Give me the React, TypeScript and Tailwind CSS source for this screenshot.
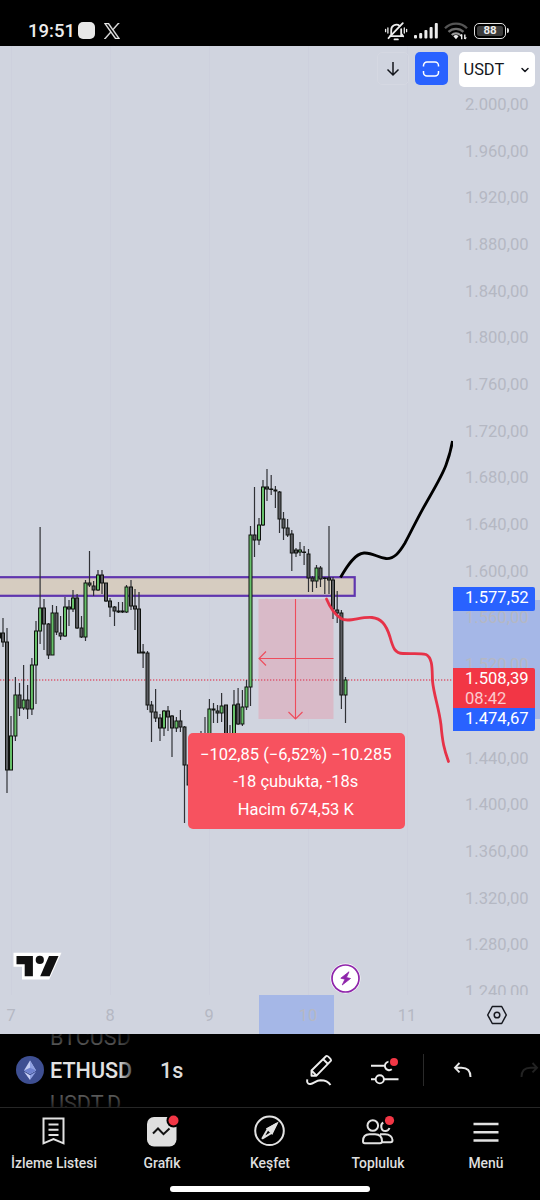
import { ChevronDown } from 'lucide-react';

// [x, high, bodyTop, bodyBottom, low, isUp]
const candles: [number, number, number, number, number, number][] = [
    [-1, 632, 633, 638, 638, 0],
    [3, 618, 633, 642, 647, 0],
    [7, 628, 642, 770, 793, 0],
    [11, 716, 736, 770, 770, 1],
    [15.4, 677, 695, 736, 741, 1],
    [19.5, 683, 695, 708, 716, 0],
    [23.6, 665, 700, 708, 710, 1],
    [27.6, 685, 700, 709, 719, 0],
    [31.9, 658, 665, 709, 715, 1],
    [36, 621, 631, 665, 704, 1],
    [40.1, 527, 608, 631, 644, 1],
    [44, 599, 608, 624, 650, 0],
    [48.5, 623, 624, 655, 659, 0],
    [52.5, 605, 613, 655, 655, 1],
    [56.5, 606, 613, 632, 635, 0],
    [60.6, 616, 633, 636, 640, 0],
    [65, 597, 607, 636, 637, 1],
    [69, 600, 607, 609, 626, 0],
    [73, 590, 598, 609, 612, 1],
    [77.1, 594, 598, 628, 629, 0],
    [81.5, 616, 628, 637, 638, 0],
    [85.5, 580, 583, 637, 641, 1],
    [89.5, 551, 583, 585, 587, 0],
    [93.6, 581, 586, 590, 596, 0],
    [98, 570, 575, 590, 591, 1],
    [102, 570, 575, 583, 594, 0],
    [106, 583, 583, 601, 602, 0],
    [110, 598, 601, 607, 617, 0],
    [114.5, 606, 607, 611, 626, 0],
    [118.5, 602, 611, 612, 613, 0],
    [122.5, 602, 611, 612, 613, 0],
    [126.5, 585, 587, 612, 613, 1],
    [131, 580, 587, 606, 610, 0],
    [135, 589, 606, 609, 630, 0],
    [139, 592, 609, 653, 653, 0],
    [143.1, 644, 652, 653, 668, 0],
    [147.5, 651, 653, 705, 710, 0],
    [151.5, 701, 705, 712, 742, 0],
    [155.6, 689, 712, 718, 722, 0],
    [160, 714, 718, 728, 741, 0],
    [164, 710, 711, 728, 736, 1],
    [168, 706, 711, 717, 731, 0],
    [172, 715, 716, 728, 757, 0],
    [176.4, 717, 721, 728, 732, 1],
    [180.4, 710, 721, 727, 732, 0],
    [184.5, 726, 727, 765, 823, 0],
    [188.6, 765, 765, 785, 785, 0],
    [201, 731, 740, 750, 760, 0],
    [205, 717, 740, 750, 760, 0],
    [209.4, 699, 709, 745, 750, 1],
    [213.5, 703, 709, 710, 723, 0],
    [217.5, 705, 711, 713, 723, 0],
    [221.6, 693, 706, 713, 722, 1],
    [226, 705, 705, 745, 750, 0],
    [230, 725, 738, 745, 750, 0],
    [234, 690, 705, 745, 750, 1],
    [238.1, 688, 704, 724, 725, 0],
    [242.4, 690, 707, 724, 726, 1],
    [246.5, 680, 687, 707, 710, 1],
    [250.5, 526, 535, 687, 706, 1],
    [254.5, 487, 535, 540, 557, 0],
    [259, 518, 525, 540, 545, 1],
    [263, 480, 487, 525, 526, 1],
    [267, 469, 487, 489, 501, 0],
    [271.2, 475, 489, 489.5, 495, 0],
    [275.4, 486, 490, 491, 508, 0],
    [279.5, 491, 492, 519, 533, 0],
    [283.5, 512, 519, 528, 540, 0],
    [287.6, 519, 528, 535, 537, 0],
    [291.8, 530, 534, 553, 571, 0],
    [296, 548, 550, 553, 557, 0],
    [300, 542, 550, 552, 556, 1],
    [304.1, 546, 552, 552.5, 565, 0],
    [308.5, 549, 554, 578, 592, 0],
    [312.5, 576, 578, 581, 592, 0],
    [316.5, 565, 568, 581, 588, 1],
    [320.5, 566, 568, 579, 587, 0],
    [324.8, 577, 578, 578.5, 594, 0],
    [329, 526, 578, 580, 594, 0],
    [333, 577, 580, 609, 619, 0],
    [337.2, 591, 610, 613, 623, 0],
    [341.4, 610, 613, 695, 709, 0],
    [345.5, 677, 680, 695, 723, 1],
];

const prices = [
    '2.000,00', '1.960,00', '1.920,00', '1.880,00', '1.840,00', '1.800,00', '1.760,00',
    '1.720,00', '1.680,00', '1.640,00', '1.600,00', '1.560,00', '1.520,00', '1.480,00',
    '1.440,00', '1.400,00', '1.360,00', '1.320,00', '1.280,00', '1.240,00',
];

const days = ['7', '8', '9', '10', '11'];

const StatusBar = () => (
    <div className="h-[46px] shrink-0 flex items-center justify-between pl-7 pr-[31px] pt-[15px] text-[#ececec]">
        <div className="flex items-center">
            <span className="text-[18.5px] leading-none font-medium w-[50px] pt-px">19:51</span>
            <span className="w-[17px] h-[17px] rounded-[5px] bg-[#e8e8e8]"></span>
            <svg className="ml-[9px]" width="16" height="16" viewBox="0 0 24 24" fill="currentColor" stroke="currentColor" strokeWidth="0.6">
                <path d="M14.258 10.152 23.176 0h-2.113l-7.747 8.813L7.133 0H0l9.352 13.328L0 23.973h2.113l8.176-9.309 6.531 9.309h7.133zm-2.895 3.293-.949-1.328L2.875 1.56h3.246l6.086 8.523.945 1.328 7.91 11.078h-3.246z" />
            </svg>
        </div>
        <div className="flex items-center">
            <svg width="24" height="20" viewBox="0 0 24 20" fill="none" stroke="currentColor" strokeWidth="1.8" strokeLinecap="round">
                <path d="M6 15.2h13.2M7.2 15V9.2a5.2 5.2 0 0 1 8.5-4.3M17.2 8.2V15M19.2 15.2l-2-2.6" />
                <path d="M4.5 17.2 18.8 2.2" />
                <path d="M10.5 18.4h3.4" />
                <path d="M3.9 7v5M1.6 8.3v2.4M20.3 7v5M22.6 8.3v2.4" strokeWidth="1.3" />
            </svg>
            <svg className="ml-[6px]" width="25" height="17" viewBox="0 0 25 17" fill="currentColor">
                <rect x="0" y="13" width="3" height="3.5" rx="1" />
                <rect x="5.2" y="11" width="3" height="5.5" rx="1" />
                <rect x="10.4" y="8" width="3" height="8.5" rx="1" />
                <rect x="15.6" y="5" width="3" height="11.5" rx="1" />
                <rect x="20.8" y="1" width="3" height="15.5" rx="1" />
            </svg>
            <svg className="ml-[5px]" width="24" height="18" viewBox="0 0 24 18" fill="none" strokeWidth="2.3">
                <path d="M1 6.3a15.5 15.5 0 0 1 22 0" stroke="#555" />
                <path d="M4.5 9.9a10.6 10.6 0 0 1 15 0" stroke="#6a6a6a" />
                <path d="M7.8 13a6 6 0 0 1 8.4 0" stroke="#999" />
                <path d="M9.3 14.2a4 4 0 0 1 5.2 0L12 17.2z" fill="#eee" />
                <path d="M17.7 17.2v-4.6M20.8 12.4V17" stroke="#eee" strokeWidth="1.4" />
                <path d="m16.2 14.2 1.5-1.7M22.3 15.4 20.8 17" stroke="#eee" strokeWidth="1.2" />
            </svg>
            <div className="ml-[6px] w-[32px] h-[16px] rounded-[5px] border-[1.5px] border-[#e0e0e0] p-[2px] flex">
                <span className="flex-1 bg-[#3c3c3c] rounded-[2px] flex items-center justify-center text-[11.5px] leading-none font-bold">88</span>
            </div>
            <span className="ml-[1px] w-[2px] h-[5px] rounded-r bg-[#ddd]"></span>
        </div>
    </div>
);

const ChartCanvas = () => (
    <svg className="block" width="453" height="949" viewBox="0 46 453 949" fill="none">
        {[11, 110, 209, 308, 407].map(x => (
            <path key={x} d={`M${x + 0.5} 46V995`} stroke="#cccfdb" strokeOpacity="0.7" />
        ))}

        <rect x="-4" y="577.2" width="358.7" height="18.6" fill="#d6ccc0" stroke="#5f35ae" strokeWidth="2.2" />
        <rect x="258.5" y="599" width="75" height="120" fill="#d9bac8" />
        <path d="M0 680H453" stroke="#dc5a70" strokeWidth="1.3" strokeDasharray="1.3 1.7" />

        {candles.map(([x, high, top, bottom, low, up]) => (
            <g key={x}>
                <path d={`M${x} ${high}V${low}`} stroke="#303136" strokeWidth="1.2" />
                <rect
                    x={x - 1.5}
                    y={top}
                    width="3"
                    height={bottom - top}
                    fill={up ? '#66c069' : '#5c5d62'}
                    stroke="#0f120f"
                    strokeWidth="1"
                />
            </g>
        ))}

        <g stroke="#ee4c5c" strokeWidth="1.1">
            <path d="M295.5 599V719M288.5 712l7 7 7-7" />
            <path d="M333.5 658.5H259M266 651.5l-7 7 7 7" />
        </g>

        <path
            d="M340.5 577.5C347 566 355 553.5 364 553C373 552.5 378 558 386 558.5C394 559 399 553 405 543C411 532 417 519 425 505C434 489 442 476 446 465C450 454 451 450 452.5 441"
            stroke="#000"
            strokeWidth="2.8"
        />
        <path
            d="M326.5 599C329 605 334 614 341 618.5C348 623 360 616.5 372 617.5C381 618.5 386 624 390 637C393 648 395 653.5 403 653.5C413 654 420 653 426 654.5C433 658 432 670 432.5 681C434 696 439 708 441 725C442.5 742 444 749 448.5 761.5"
            stroke="#e63248"
            strokeWidth="2.8"
            strokeLinecap="round"
        />
    </svg>
);

const MeasureLabel = () => (
    <div className="absolute left-[187.5px] top-[687px] w-[217.5px] h-[96px] rounded-[5px] bg-[#f7525f] text-white text-[16.5px] leading-[27.5px] text-center pt-[7.5px] pr-px">
        <p>−102,85 (−6,52%) −10.285</p>
        <p>-18 çubukta, -18s</p>
        <p>Hacim 674,53 K</p>
    </div>
);

const PriceAxis = () => (
    <div className="relative w-[87px] h-[949px] overflow-hidden">
        <div className="absolute left-0 top-[554px] w-full h-[119px] bg-[#a5b7e7]"></div>
        <div className="relative pt-9 flex flex-col">
            {prices.map(price => (
                <span key={price} className="h-[46.7px] shrink-0 flex items-center pl-3 text-[16.6px] text-[#b5b8c3]">
                    {price}
                </span>
            ))}
        </div>
        <div className="absolute left-0 top-[541px] w-[81.5px] h-6 rounded-r-[2px] bg-[#2962ff] text-white text-[16.6px] flex items-center pl-3 pb-px">
            1.577,52
        </div>
        <div className="absolute left-0 top-[622px] w-[81.5px] rounded-r-[2px] overflow-hidden text-white text-[16.6px]">
            <div className="h-10 bg-[#f23645] pl-3 pt-px leading-[19.5px]">
                <p>1.508,39</p>
                <p className="text-[#fbc9cd]">08:42</p>
            </div>
            <div className="h-[23px] bg-[#2962ff] pl-3 leading-[21px]">1.474,67</div>
        </div>
    </div>
);

const TimeAxis = () => (
    <div className="h-[39px] relative">
        <div className="absolute left-[258.5px] top-0 w-[75px] h-[39px] bg-[#a5b7e7]"></div>
        <div className="relative h-full flex items-center">
            <div className="flex -ml-[38.5px] mt-[3px] w-[496px]">
                {days.map(day => (
                    <span key={day} className="w-[99px] text-center text-[16.4px] text-[#b5b8c3]">{day}</span>
                ))}
            </div>
            <svg className="ml-[28.5px] mt-[1px]" width="22" height="20" viewBox="0 0 22 20" fill="none" stroke="#16181f" strokeWidth="1.5">
                <path d="M6.3 1.5h9.4l4.6 8.5-4.6 8.5H6.3L1.7 10z" strokeLinejoin="round" />
                <circle cx="11" cy="10" r="2.8" />
            </svg>
        </div>
    </div>
);

const TopControls = () => (
    <div className="absolute top-[6px] right-[5.5px] flex items-start">
        <button className="w-8 h-[33px] rounded-[5px] border border-[#d5d8e2] flex items-center justify-center">
            <svg width="14" height="16" viewBox="0 0 14 16" fill="none" stroke="#14161c" strokeWidth="1.5">
                <path d="M7 1v13M1.5 8.5 7 14l5.5-5.5" />
            </svg>
        </button>
        <button className="ml-[6px] w-[33px] h-[33px] rounded-[5px] bg-[#2962ff] flex items-center justify-center">
            <svg width="18" height="18" viewBox="0 0 18 18" fill="none" stroke="#fff" strokeWidth="1.5">
                <path d="M1.5 6.5v-1A3.5 3.5 0 0 1 5 2h8a3.5 3.5 0 0 1 3.5 3.5v1M1.5 11v1.5A3.5 3.5 0 0 0 5 16h8a3.5 3.5 0 0 0 3.5-3.5V11" />
            </svg>
        </button>
        <button className="ml-[11px] w-[76px] h-[35px] rounded-[5px] bg-white flex items-center justify-between pl-[5px] pr-1 pt-px text-[16.4px] text-[#14161c]">
            USDT
            <ChevronDown size={12} strokeWidth={3} />
        </button>
    </div>
);

const TradingViewMark = () => (
    <svg className="absolute left-[13px] top-[906px]" width="50" height="30" viewBox="0 0 50 30">
        <path d="M.5.8H48.5L36.2 27.4H9V14.8H.5z" fill="#fff" />
        <g fill="#111">
            <path d="M3.5 4h16.4v20.2h-8.2V12.3H3.5z" />
            <circle cx="26.8" cy="7.9" r="4.1" />
            <path d="M36 4h9.5L36.6 24.2h-9.4z" />
        </g>
    </svg>
);

const LightningBadge = () => (
    <svg className="absolute left-[330px] top-[917px]" width="31" height="31" viewBox="0 0 31 31">
        <circle cx="15.5" cy="15.5" r="15" fill="#fff" />
        <circle cx="15.5" cy="15.5" r="13.5" fill="#fff" stroke="#8e24aa" strokeWidth="1.7" />
        <path d="M19 8.8 10.8 15.2 15 16.2 12.2 22 20.5 15.5 16.4 14.5z" fill="#8e24aa" stroke="#8e24aa" strokeWidth=".8" strokeLinejoin="round" />
    </svg>
);

const SymbolBar = () => (
    <div className="h-[73px] shrink-0 flex items-center pl-4 pb-[2px] overflow-hidden bg-black">
        <svg width="28" height="28" viewBox="0 0 28 28">
            <circle cx="14" cy="14" r="14" fill="#3e4f92" />
            <path d="M14 4.5 8 14.4 14 17.9 20 14.4z" fill="#c3ccf3" />
            <path d="M14 4.5V17.9L20 14.4z" fill="#8fa1e2" />
            <path d="M14 11.7 8 14.4 14 17.9 20 14.4z" fill="#6f82cf" />
            <path d="M8 15.7 14 24V19.2z" fill="#c9d1f6" />
            <path d="M20 15.7 14 24V19.2z" fill="#8fa1e2" />
        </svg>
        <div className="relative ml-[6px] w-[90px] h-[73px] -mb-[2px] shrink-0 flex flex-col justify-center text-[21.6px] overflow-hidden">
            <span className="h-[33px] leading-[33px] shrink-0 text-[#5a5a5a]">BTCUSD</span>
            <span className="h-[33px] leading-[33px] shrink-0 font-medium text-[#e2e2e2]">ETHUSD</span>
            <span className="h-[33px] leading-[33px] shrink-0 text-[#5a5a5a]">USDT.D</span>
            <div className="absolute inset-y-0 right-0 w-[22px] bg-gradient-to-r from-transparent to-black"></div>
            <div className="absolute inset-x-0 top-0 h-3 bg-gradient-to-b from-black/60 to-transparent"></div>
            <div className="absolute inset-x-0 bottom-0 h-3 bg-gradient-to-t from-black/60 to-transparent"></div>
        </div>
        <span className="ml-5 w-[146px] pt-[3px] text-[21.5px] font-medium text-[#dcdcdc]">1s</span>
        <svg width="28" height="32" viewBox="0 0 28 32" fill="none" stroke="#ededed" strokeWidth="1.9" strokeLinejoin="round">
            <path d="M5.5 16.5 20 2.2c1.2-1.2 6 3.4 4.8 4.7L10.5 21.7H5.5zM17 5l5 5M5.7 16.7l4.8 5" />
            <path d="M1.5 25.3C.5 27.5 1.5 30.5 4.5 30C8 29.3 10 26.5 14.5 26.3C18.5 26.3 22 27 24.5 31" />
        </svg>
        <svg className="ml-[36px]" width="30" height="32" viewBox="0 0 30 32" fill="none" stroke="#ededed" strokeWidth="1.9">
            <path d="M1 11.8h13.5M19 7.6a4.3 4.3 0 1 0 2.8 7.7" />
            <path d="M1 25.3h4.7M14 25.3h14.5" />
            <circle cx="9.8" cy="25.3" r="4.1" />
            <circle cx="24" cy="8" r="5.6" fill="#000" stroke="none" />
            <circle cx="24" cy="8" r="4" fill="#f23645" stroke="none" />
        </svg>
        <span className="ml-[23px] w-px h-8 bg-[#2a2a2a] shrink-0"></span>
        <svg className="ml-[29px] shrink-0" width="20" height="16" viewBox="0 0 20 16" fill="none" stroke="#e8e8e8" strokeWidth="1.9">
            <path d="M6.5 1 2 5.7l4.5 4.7M2 5.7h6.5c6 0 9 3 9 9.3" />
        </svg>
        <svg className="ml-[46px] shrink-0" width="20" height="16" viewBox="0 0 20 16" fill="none" stroke="#222" strokeWidth="1.9">
            <path d="m13.5 1 4.5 4.7-4.5 4.7M18 5.7h-6.5c-6 0-9 3-9 9.3" />
        </svg>
    </div>
);

const navItems = [
    {
        label: 'İzleme Listesi',
        icon: (
            <path d="M5.5 2.5h20v24.8L15.5 23 5.5 27.3zM10.5 8.5h10M10.5 13.8h10M10.5 19h10" />
        ),
    },
    {
        label: 'Grafik',
        icon: (
            <>
                <rect x="1" y="1" width="29.5" height="29.5" rx="7" fill="#dfdfdf" stroke="none" />
                <path d="m7 17.5 5-5 5.5 5.7 6-5.7" stroke="#111" />
                <circle cx="27.5" cy="4.5" r="7" fill="#000" stroke="none" />
                <circle cx="27.5" cy="4.5" r="5" fill="#f23645" stroke="none" />
            </>
        ),
    },
    {
        label: 'Keşfet',
        icon: (
            <>
                <circle cx="15.5" cy="14.8" r="14.3" />
                <path d="m22.5 7.8-8.5 5-5.5 9.5 9-5.5z" strokeLinejoin="round" />
                <path d="m22.5 7.8-9 5 4.5 4.5z" fill="#e2e2e2" />
            </>
        ),
    },
    {
        label: 'Topluluk',
        icon: (
            <>
                <circle cx="10.8" cy="9.5" r="5.3" />
                <path d="M2.8 27.3c-1.5 0-1.8-.8-1.8-2C1 21 3.5 18.3 7.5 18.3h5.5c4.5 0 7 2.7 7 7 0 1.2-.5 2-2 2zM18 18.3h5c4.5 0 7.5 2.5 7.5 5.7 0 1.5-.5 2.3-2 2.3h-8M21.5 6.5c-3.5 1.5-3 8.5 2 8.5 2 0 3.3-1.2 4-3" />
                <circle cx="27.5" cy="4.5" r="6.5" fill="#000" stroke="none" />
                <circle cx="27.5" cy="4.5" r="4.6" fill="#f23645" stroke="none" />
            </>
        ),
    },
    {
        label: 'Menü',
        icon: <path d="M3.5 8h25M3.5 16.2h25M3.5 24.5h25" strokeWidth="2.5" />,
    },
];

const BottomNav = () => (
    <div className="flex-1 border-t border-[#262626] bg-black flex flex-col">
        <div className="flex pt-[8px]">
            {navItems.map(item => (
                <button key={item.label} className="w-[108px] flex flex-col items-center">
                    <svg className="overflow-visible mr-[1px]" width="31" height="31" viewBox="0 0 31 31" fill="none" stroke="#e2e2e2" strokeWidth="2">
                        {item.icon}
                    </svg>
                    <span className="mt-[6px] text-[13.9px] leading-5 font-medium text-[#dedede]">{item.label}</span>
                </button>
            ))}
        </div>
        <div className="mt-auto mb-[8px] mx-auto w-[200px] h-[6px] rounded-full bg-white"></div>
    </div>
);

const App = () => {
    return (
        <div className="w-[540px] h-[1200px] overflow-hidden flex flex-col bg-black font-[Roboto,sans-serif]">
            <StatusBar />
            <div className="relative h-[988px] shrink-0 bg-[#d0d4df]">
                <div className="flex">
                    <ChartCanvas />
                    <PriceAxis />
                </div>
                <TimeAxis />
                <MeasureLabel />
                <TradingViewMark />
                <LightningBadge />
                <TopControls />
            </div>
            <SymbolBar />
            <BottomNav />
        </div>
    );
};

export default App;
